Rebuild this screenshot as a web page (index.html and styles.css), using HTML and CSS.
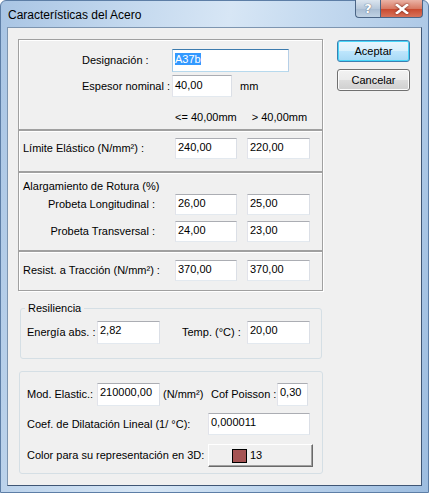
FILE: index.html
```html
<!DOCTYPE html>
<html lang="es">
<head>
<meta charset="utf-8">
<title>Características del Acero</title>
<link rel="stylesheet" href="styles.css">
</head>
<body>
<div class="window">
  <div class="titlebar">
    <span class="title">Características del Acero</span>
    <div class="caption">
      <div class="cap-btn help">?</div>
      <div class="cap-btn close"><svg width="14" height="10" viewBox="0 0 14 10"><path d="M2 1 L12 9 M12 1 L2 9" stroke="#fff" stroke-width="2.6" stroke-linecap="square"/></svg></div>
    </div>
  </div>
  <div class="client">
    <div class="left">
      <div class="etched">
        <div class="sec sec1">
          <div class="row r-desig"><span class="lbl w90">Designación :</span><div class="edit focus w117"><span class="sel">A37b</span></div></div>
          <div class="row r-esp"><span class="lbl w90">Espesor nominal :</span><div class="edit w60">40,00</div><span class="unit">mm</span></div>
          <div class="row r-head"><span class="head h1">&lt;= 40,00mm</span><span class="head h2">&gt; 40,00mm</span></div>
        </div>
        <div class="sep"></div>
        <div class="sec sec2">
          <div class="vrow"><span class="lbl pl">Límite Elástico (N/mm²) :</span><div class="edit">240,00</div><div class="edit">220,00</div></div>
        </div>
        <div class="sep"></div>
        <div class="sec sec3">
          <div class="sec-title">Alargamiento de Rotura (%)</div>
          <div class="vrow r-long"><span class="lbl pr">Probeta Longitudinal :</span><div class="edit">26,00</div><div class="edit">25,00</div></div>
          <div class="vrow r-trans"><span class="lbl pr">Probeta Transversal :</span><div class="edit">24,00</div><div class="edit">23,00</div></div>
        </div>
        <div class="sep"></div>
        <div class="sec sec4">
          <div class="vrow"><span class="lbl pl">Resist. a Tracción (N/mm²) :</span><div class="edit">370,00</div><div class="edit">370,00</div></div>
        </div>
      </div>

      <fieldset class="group resil">
        <legend>Resiliencia</legend>
        <div class="row r-res">
          <span class="lbl l-energia">Energía abs. :</span><div class="edit w63">2,82</div>
          <span class="lbl l-temp">Temp. (°C) :</span><div class="edit w63">20,00</div>
        </div>
      </fieldset>

      <div class="group props">
        <div class="row r-mod">
          <span class="lbl l-mod">Mod. Elastic.:</span><div class="edit w63">210000,00</div>
          <span class="lbl l-nmm">(N/mm²)</span><span class="lbl l-poi">Cof Poisson :</span><div class="edit w31">0,30</div>
        </div>
        <div class="row r-coef">
          <span class="lbl l-coef">Coef. de Dilatación Lineal (1/ °C):</span><div class="edit w102">0,000011</div>
        </div>
        <div class="row r-color">
          <span class="lbl l-coef">Color para su representación en 3D:</span>
          <div class="colorbtn"><span class="swatch"></span><span>13</span></div>
        </div>
      </div>
    </div>
    <div class="right">
      <div class="btn default">Aceptar</div>
      <div class="btn">Cancelar</div>
    </div>
  </div>
</div>
</body>
</html>
```
FILE: styles.css
```css
* { box-sizing: border-box; }
html, body { margin: 0; padding: 0; background: #fff; }
body { width: 429px; height: 493px; overflow: hidden; }

.window {
  width: 429px;
  height: 493px;
  display: flex;
  flex-direction: column;
  border: 1px solid #5d7ea6;
  border-radius: 6px 6px 0 0;
  background: linear-gradient(100deg, #a9c5e4 0%, #c3d8ee 25%, #d7e6f5 45%, #c6dbf0 60%, #b2cce8 80%, #9dbde0 100%);
  padding: 0 6px 6px 6px;
}

.titlebar {
  height: 26px;
  flex: none;
  display: flex;
  align-items: flex-start;
  justify-content: space-between;
  font-family: "Liberation Sans", Arial, sans-serif;
  font-size: 12px;
  color: #000;
}
.title { margin: 6px 0 0 1px; line-height: 16px; }
.caption { display: flex; margin-top: -1px; margin-right: -1px; }
.cap-btn {
  height: 18px;
  border: 1px solid #4b6586;
  border-top: none;
  display: flex; align-items: center; justify-content: center;
}
.help {
  width: 25px;
  border-right: none;
  border-radius: 0 0 0 4px;
  background: linear-gradient(#dbe5ef, #b8c9db 50%, #a7bbd1 51%, #c0d2e4);
  color: #fff;
  font-family: "DejaVu Sans", sans-serif;
  font-weight: bold;
  font-size: 13px;
  text-shadow: 0 0 1px #5a6b80, 0 0 1px #5a6b80;
}
.close {
  width: 43px;
  border-radius: 0 0 4px 0;
  background: linear-gradient(#eab3a6, #d87a64 50%, #c8472c 51%, #d8735a);
}
.close svg { filter: drop-shadow(0 0 1px #6a1a10); }

.client {
  flex: 1;
  background: #f0f0f0;
  border: 1px solid;
  border-color: #7d95b0 #3f5675 #3f5675 #7d95b0;
  display: flex;
  align-items: flex-start;
  padding: 11px 0 0 10px;
  font-family: "Liberation Sans", Arial, sans-serif;
  font-size: 11px;
  line-height: 13px;
  color: #000;
}

.left { width: 305px; flex: none; display: flex; flex-direction: column; }

.etched {
  border: 1px solid #a0a0a0;
  box-shadow: inset 1px 1px 0 #fff, 1px 1px 0 #fff;
  height: 252px;
  display: flex;
  flex-direction: column;
}
.sec { flex: none; }
.sec1 { height: 89px; }
.sec2 { height: 39px; }
.sec3 { height: 76px; }
.sec4 { height: 37px; }
.sep { height: 3px; flex: none; border-top: 2px solid #a0a0a0; border-bottom: 1px solid #fff; }

.row { display: flex; align-items: center; }
.lbl { white-space: nowrap; }
.w90 { width: 90px; }

.edit {
  background: #fff;
  border: 1px solid;
  border-color: #abadb3 #dbdfe6 #e3e9ef #e2e3ea;
  height: 21px;
  padding: 2px 2px 0 2px;
  white-space: nowrap;
  overflow: hidden;
}
.edit.focus { border-color: #3d7bad #b5cfe7 #b7d9ed #a4c9e3; }
.sel { background: #3399ff; color: #fff; }
.w117 { width: 117px; }
.w60 { width: 60px; }
.w63 { width: 63px; }
.w31 { width: 31px; }
.w102 { width: 102px; }

.r-desig { margin: 9px 0 0 63px; height: 23px; }
.r-desig .edit { height: 23px; padding-top: 3px; }
.r-esp { margin: 3px 0 0 63px; height: 22px; }
.r-esp .edit { height: 22px; padding-top: 3px; }
.unit { margin-left: 8px; }
.r-head { margin: 14px 0 0 156px; }
.h2 { margin-left: 15px; }

.vrow {
  display: grid;
  grid-template-columns: 146px 62px 63px;
  column-gap: 10px;
  align-items: center;
  height: 21px;
}
.pl { padding-left: 4px; }
.pr { text-align: right; padding-right: 10px; }
.sec2 .vrow { margin-top: 6px; }
.sec-title { margin: 6px 0 0 4px; }
.r-long { margin-top: 1px; }
.r-trans { margin-top: 6px; }
.sec4 .vrow { margin-top: 7px; }

.group {
  border: 1px solid #d5dfe5;
  border-radius: 3px;
  margin: 0;
}
.resil {
  margin: 11px 1px 0 2px;
  padding: 6px 0 0 6px;
  height: 57px;
}
.resil legend { padding: 0 3px; margin-left: -2px; }
.r-res { height: 23px; }
.r-res .edit { height: 23px; }
.l-energia { width: 70px; }
.l-temp { width: 65px; margin-left: 22px; }

.props {
  margin: 12px 0 0 1px;
  height: 103px;
  padding: 11px 0 0 7px;
}
.r-mod { height: 23px; }
.r-mod .edit { height: 23px; }
.l-mod { width: 70px; }
.l-nmm { margin-left: 3px; width: 48px; }
.l-poi { width: 66px; }
.r-coef { margin-top: 7px; height: 22px; }
.r-coef .edit { height: 22px; }
.l-coef { width: 181px; }
.r-color { margin-top: 9px; height: 23px; }
.colorbtn {
  width: 105px;
  height: 23px;
  background: #f0f0f0;
  border: 1px solid;
  border-color: #fff #696969 #696969 #fff;
  box-shadow: inset -1px -1px 0 #a0a0a0;
  display: flex;
  align-items: center;
  padding-left: 23px;
  gap: 3px;
}
.swatch { width: 15px; height: 14px; background: #a55353; border: 1px solid #000; }

.right { margin-left: 14px; padding-top: 1px; display: flex; flex-direction: column; gap: 7px; }
.btn {
  width: 73px;
  height: 22px;
  border: 1px solid #707070;
  border-radius: 3px;
  background: linear-gradient(#f2f2f2, #ebebeb 49%, #dddddd 50%, #cfcfcf);
  box-shadow: inset 0 0 0 1px #fcfcfc;
  display: flex; align-items: center; justify-content: center;
  font-size: 11px;
}
.btn.default {
  border-color: #3c7fb1;
  background: linear-gradient(#eaf6fd, #d9f0fc 49%, #bee6fd 50%, #a7d9f5);
  box-shadow: inset 0 0 0 1px #48d6f8;
}
```
